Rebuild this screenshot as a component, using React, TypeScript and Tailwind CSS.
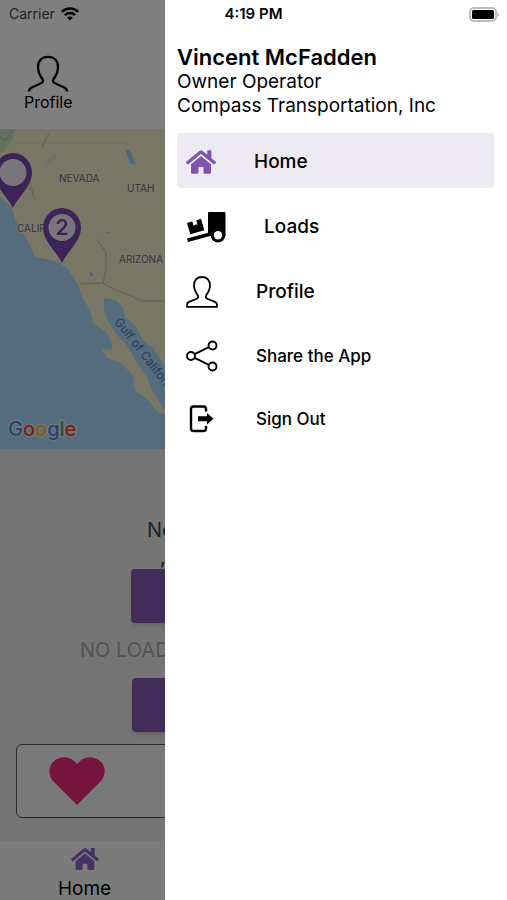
import type { ReactNode } from "react";
import { FaHome } from "react-icons/fa";

function WifiIcon() {
  return (
    <svg viewBox="0 0 18 14" className="h-[14px] w-[18px]" fill="none" stroke="black" strokeWidth="2.5" aria-hidden>
      <path d="M.9 4.9C5.4.5 12.6.5 17.1 4.9" />
      <path d="M3.9 8.1c2.9-2.8 7.3-2.8 10.2 0" />
      <path d="M9 13.6 6.1 10.7c1.6-1.6 4.2-1.6 5.8 0z" fill="black" stroke="none" />
    </svg>
  );
}

function BatteryIcon() {
  return (
    <svg viewBox="0 0 31 15" className="h-[15px] w-[31px]" aria-hidden>
      <rect x="1" y="1" width="26" height="13" rx="4" fill="white" stroke="#bdbdbd" strokeWidth="2" />
      <rect x="3" y="3" width="22" height="9" rx="1.5" fill="black" />
      <path d="M28.3 5v5c1-.4 1.7-1.4 1.7-2.5S29.3 5.4 28.3 5z" fill="#bdbdbd" />
    </svg>
  );
}

function BustIcon() {
  return (
    <svg viewBox="0 0 42 38" className="h-[38px] w-[42px]" fill="none" stroke="black" strokeWidth="2.3" aria-hidden>
      <path d="M2 36.5c0-2 .8-3 2.8-4l9.2-4.2c2.2-1 2.6-2.6 1.4-4.3-3.200-4.200-4.400-7.500-4.400-12C11 5.500 15 1.800 21 1.800S31 5.500 31 12c0 4.500-1.200 7.800-4.400 12-1.200 1.700-.8 3.300 1.400 4.300l9.200 4.200c2 1 2.800 2 2.800 4" />
    </svg>
  );
}

function TruckIcon() {
  return (
    <svg viewBox="0 0 40 32" className="h-8 w-10" fill="black" aria-hidden>
      <path d="M22 2q0-1 1-1h15.500q1 0 1 1v23H22z" />
      <circle cx="32" cy="24.300" r="7.200" />
      <circle cx="32" cy="24.300" r="4.200" fill="white" />
      <path d="M1 27.500 25 21l1 3.500L2 31z" />
      <path d="M1 12l5.300-1.700 1.300 4.700 1.700-1.500 2.200.2-1.200-4.500L15 7.700l3.300 11.600-14 4z" />
    </svg>
  );
}

function PersonIcon() {
  return (
    <svg viewBox="0 0 32 32" className="h-8 w-8" fill="none" stroke="black" strokeWidth="1.8" strokeLinejoin="round" aria-hidden>
      <path d="M1 30.800c0-3.300 0-4 2.600-5.100l6.600-2.700c2-.8 2.500-2.200 1.500-3.900C9.300 15.800 8 13.300 8 9.500 8 4 11.300 1 16 1s8 3 8 8.500c0 3.800-1.300 6.300-3.700 9.600-1 1.700-.5 3.100 1.500 3.900l6.600 2.700C31 26.800 31 27.500 31 30.800z" />
    </svg>
  );
}

function ShareIcon() {
  return (
    <svg viewBox="0 0 32 32" className="h-8 w-8" fill="none" stroke="black" strokeWidth="1.9" aria-hidden>
      <circle cx="5" cy="16" r="4" />
      <circle cx="26.500" cy="5.500" r="4" />
      <circle cx="26.500" cy="26.500" r="4" />
      <path d="M8.600 14.200 22.900 7.200M8.600 17.800l14.300 7" />
    </svg>
  );
}

function SignOutIcon() {
  return (
    <svg viewBox="0 0 32 32" className="h-8 w-8" fill="none" stroke="black" aria-hidden>
      <path d="M20 8.500V6c0-1.700-.8-2.500-2.500-2.500H7.500C5.800 3.500 5 4.300 5 6v19.500c0 1.700.8 2.500 2.500 2.500h10c1.700 0 2.500-.8 2.500-2.500V23" strokeWidth="2.4" />
      <path d="M12 13.300h9V10l6.500 5.800-6.500 5.800v-3.300h-9z" fill="black" stroke="none" />
    </svg>
  );
}

function Pin({ x, y, count }: { x: number; y: number; count?: number }) {
  return (
    <g transform={`translate(${x} ${y})`}>
      <path d="M0 0C-5-11-19-22-19-35a19 20 0 0 1 38 0C19-22 5-11 0 0z" fill="#7a47b0" />
      <circle cy="-35.500" r="13.500" fill="#f1edf5" />
      {count !== undefined && (
        <text y="-28" textAnchor="middle" fontSize="21" fontWeight="600" fill="#7a47b0">
          {count}
        </text>
      )}
    </g>
  );
}

function CoastMap() {
  return (
    <svg viewBox="0 0 507 320" preserveAspectRatio="xMinYMin slice" className="h-80 w-full" role="img" aria-label="Map">
      <rect width="507" height="320" fill="#aad8fc" />
      <path
        d="M0 0H507V320H200L164 285 158 283 147 270 135 262 133 246 122 235 108 229 101 220 112 221 112 214 107 204 93 194 90 181 82 168 78 156 73 148 67 139 60 134 50 131 35 128 28 112 20 100 15 90 12 79 0 68z"
        fill="#f3f0ce"
      />
      <path d="M0 0h16c-2 7-2 12-8 17-2 5-5 6-8 7z" fill="#cbe3bd" />
      <path d="M0 7q4 7 9 1l3-7" fill="none" stroke="#a7d1be" strokeWidth="2" />
      <path d="M12 28c12 6 18 19 23 41-8-7-7-20-15-30" fill="#d2dfb6" />
      <path d="M42 18l7-14M30 57l5 13M0 35l12 3" stroke="#d2dfb6" strokeWidth="2" />
      <path d="M16 14H130" stroke="#e0dcb8" fill="none" />
      <path d="M104 169l11 2 8 7 2 10 12 11 6 12 10 8 12 18 6 8v33l-7 2-11-17-6-15-12-17-8-15-10-10-9-14-4-10z" fill="#aad8fc" />
      <path d="M125 20l4 1 6 11-1 4-4-2zM90 143l3 1v4l-3-2z" fill="#9dd0f4" />
      <path d="M45 37l4-7 8-6-1 5-5 5z" fill="#e4e0dc" />
      <path d="M80 155l23-1 4 3 36 15h364M96 110l10 13 0 18-3 13M107 103l3 1" stroke="#c2bd9e" fill="none" />
      <g fontSize="10" fill="#6a6a6a" stroke="#f5f2dc" strokeWidth="2" paintOrder="stroke">
        <text x="59" y="53">NEVADA</text>
        <text x="127" y="63">UTAH</text>
        <text x="17" y="103">CALIF</text>
        <text x="119" y="134">ARIZONA</text>
      </g>
      <text transform="translate(114 193) rotate(52)" fontSize="12" fill="#4c7fae">
        Gulf of Californ
      </text>
      <Pin x={13} y={79} />
      <Pin x={62} y={134} count={2} />
      <g stroke="#dfe9f2" strokeWidth="3" paintOrder="stroke" strokeLinejoin="round">
        <text x="8" y="307" fontSize="20" fontWeight="500">
          <tspan fill="#4285f4">G</tspan>
          <tspan fill="#ea4335">o</tspan>
          <tspan fill="#fbbc05">o</tspan>
          <tspan fill="#4285f4">g</tspan>
          <tspan fill="#34a853">l</tspan>
          <tspan fill="#ea4335">e</tspan>
        </text>
      </g>
    </svg>
  );
}

function Screen() {
  return (
    <div className="flex min-h-screen flex-col bg-[#ebebeb]">
      <header className="bg-white pt-[55px] pl-6">
        <button type="button" className="flex h-[74px] flex-col items-center text-base leading-[18px]">
          <BustIcon />
          Profile
        </button>
      </header>
      <CoastMap />
      <main className="flex flex-1 flex-col overflow-hidden pt-[66px]">
        <p className="pl-[147px] text-xl leading-[30px] text-[#444]">No</p>
        <p className="pl-[160px] text-xl leading-6 text-[#222]">,</p>
        <button type="button" aria-label="Find loads" className="mx-auto h-[54px] w-[246px] rounded bg-[#8459b5] shadow-md" />
        <p className="pl-20 text-xl leading-[55px] text-[#a6a6a6]">NO LOAD</p>
        <button type="button" aria-label="View loads" className="mx-auto h-[54px] w-[243px] rounded bg-[#8459b5] shadow-md" />
        <section className="mx-4 mt-3 rounded-md border border-[#555] bg-[#f2f2f2] px-8 py-3">
          <svg viewBox="0 0 56 48" className="h-12 w-14" aria-hidden>
            <path d="M28 48 5 25C-1 19-1 10 4 5 10-1 19-1 25 4l3 3 3-3c6-5 15-5 21 1 5 5 5 14-1 20z" fill="#ea2a78" />
          </svg>
        </section>
      </main>
      <nav className="grid h-[59px] grid-cols-3 bg-[#f7f7f7]">
        <a href="#home" className="flex flex-col items-center pt-1 text-[19px] leading-8">
          <FaHome className="h-7 w-7 shrink-0 text-[#8a63c4]" aria-hidden />
          Home
        </a>
      </nav>
    </div>
  );
}

function MenuItem({ icon, label, active, small }: { icon: ReactNode; label: string; active?: boolean; small?: boolean }) {
  return (
    <a
      href={`#${label.toLowerCase().replaceAll(" ", "-")}`}
      className={`flex items-center gap-[38px] rounded px-[9px] pt-[2px] font-medium ${
        small ? "h-[53px] text-[17px] leading-6" : "h-[55px] text-[19px] leading-7"
      } ${active ? "bg-[#eeeaf3]" : ""}`}
    >
      {icon}
      {label}
    </a>
  );
}

function Drawer() {
  return (
    <aside className="absolute inset-y-0 right-0 w-[342px] bg-white pt-11 pr-[13px] pl-3">
      <h1 className="text-[22px] leading-[26px] font-semibold">Vincent McFadden</h1>
      <p className="text-[19px] leading-6">Owner Operator</p>
      <p className="text-[19px] leading-6">Compass Transportation, Inc</p>
      <nav className="mt-[15px] flex flex-col gap-[10px]">
        <MenuItem active label="Home" icon={<FaHome className="h-7 w-[30px] text-[#7d55b0]" aria-hidden />} />
        <MenuItem label="Loads" icon={<TruckIcon />} />
        <MenuItem label="Profile" icon={<PersonIcon />} />
        <MenuItem small label="Share the App" icon={<ShareIcon />} />
        <MenuItem small label="Sign Out" icon={<SignOutIcon />} />
      </nav>
    </aside>
  );
}

function StatusBar() {
  return (
    <div className="absolute inset-x-0 top-0 grid h-7 grid-cols-3 items-center px-[7px] text-sm">
      <span className="flex items-center gap-[6px] pl-[2px] text-[#222]">
        Carrier
        <WifiIcon />
      </span>
      <span className="text-center text-[15px] font-semibold">4:19 PM</span>
      <span className="justify-self-end">
        <BatteryIcon />
      </span>
    </div>
  );
}

export default function App() {
  return (
    <div className="relative min-h-screen overflow-hidden font-[Inter,sans-serif] text-black">
      <Screen />
      <div className="absolute inset-0 bg-black/50" />
      <Drawer />
      <StatusBar />
    </div>
  );
}
